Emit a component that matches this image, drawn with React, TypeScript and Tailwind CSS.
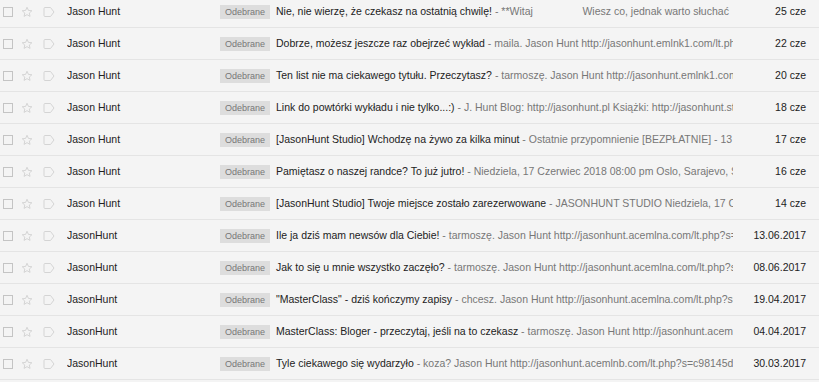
import React from "react";

type Row = { sender: string; subject: string; snippet: string; date: string };

const rows: Row[] = [
  { sender: "Jason Hunt", subject: "Nie, nie wierzę, że czekasz na ostatnią chwilę!", snippet: " - **Witaj                 Wiesz co, jednak warto słuchać", date: "25 cze" },
  { sender: "Jason Hunt", subject: "Dobrze, możesz jeszcze raz obejrzeć wykład", snippet: " - maila. Jason Hunt http://jasonhunt.emlnk1.com/lt.php?s=8d2", date: "22 cze" },
  { sender: "Jason Hunt", subject: "Ten list nie ma ciekawego tytułu. Przeczytasz?", snippet: " - tarmoszę. Jason Hunt http://jasonhunt.emlnk1.com/lt.php?s=", date: "20 cze" },
  { sender: "Jason Hunt", subject: "Link do powtórki wykładu i nie tylko...:)", snippet: " - J. Hunt Blog: http://jasonhunt.pl Książki: http://jasonhunt.store", date: "18 cze" },
  { sender: "Jason Hunt", subject: "[JasonHunt Studio] Wchodzę na żywo za kilka minut", snippet: " - Ostatnie przypomnienie [BEZPŁATNIE] - 13 czerwca", date: "17 cze" },
  { sender: "Jason Hunt", subject: "Pamiętasz o naszej randce? To już jutro!", snippet: " - Niedziela, 17 Czerwiec 2018 08:00 pm Oslo, Sarajevo, Skopje", date: "16 cze" },
  { sender: "Jason Hunt", subject: "[JasonHunt Studio] Twoje miejsce zostało zarezerwowane", snippet: " - JASONHUNT STUDIO Niedziela, 17 Czerwiec 2018", date: "14 cze" },
  { sender: "JasonHunt", subject: "Ile ja dziś mam newsów dla Ciebie!", snippet: " - tarmoszę. Jason Hunt http://jasonhunt.acemlna.com/lt.php?s=c98", date: "13.06.2017" },
  { sender: "JasonHunt", subject: "Jak to się u mnie wszystko zaczęło?", snippet: " - tarmoszę. Jason Hunt http://jasonhunt.acemlna.com/lt.php?s=c98", date: "08.06.2017" },
  { sender: "JasonHunt", subject: "\"MasterClass\" - dziś kończymy zapisy", snippet: " - chcesz. Jason Hunt http://jasonhunt.acemlna.com/lt.php?s=c98", date: "19.04.2017" },
  { sender: "JasonHunt", subject: "MasterClass: Bloger - przeczytaj, jeśli na to czekasz", snippet: " - tarmoszę. Jason Hunt http://jasonhunt.acemlna.com/lt.php?s=c98", date: "04.04.2017" },
  { sender: "JasonHunt", subject: "Tyle ciekawego się wydarzyło", snippet: " - koza? Jason Hunt http://jasonhunt.acemlnb.com/lt.php?s=c98145d9", date: "30.03.2017" },
];

function Checkbox() {
  return <div className="w-[10px] h-[10px] border border-[#c4c4c4] bg-transparent" />;
}

function Star() {
  return (
    <svg width="12" height="12" viewBox="0 0 24 24" fill="none" stroke="#cdcdcd" strokeWidth="1.6" strokeLinejoin="round">
      <path d="M12 2.5l2.9 6.3 6.8.7-5.1 4.6 1.5 6.7L12 17.3l-5.9 3.5 1.5-6.7L2.5 9.5l6.8-.7z" />
    </svg>
  );
}

function Tag() {
  return (
    <svg width="12" height="10" viewBox="0 0 12 10" fill="none" stroke="#d4d4d4" strokeWidth="1">
      <path d="M1 1.5 Q1 0.5 2 0.5 H7.5 L11 5 L7.5 9.5 H2 Q1 9.5 1 8.5 Z" />
    </svg>
  );
}

export default function App() {
  return (
    <div className="w-[819px] h-[382px] overflow-hidden bg-[#f4f4f4]" style={{ fontFamily: '"Liberation Sans", Arial, sans-serif' }}>
      <div className="-mt-[4px]">
        {rows.map((r, i) => (
          <div key={i} className="flex items-center h-[32px] border-b border-[#e4e4e4] text-[10.5px]">
            <div className="w-[18px] pl-[3px] flex items-center">
              <Checkbox />
            </div>
            <div className="w-[22px] pl-[3px] flex items-center">
              <Star />
            </div>
            <div className="w-[27px] pl-[3px] flex items-center">
              <Tag />
            </div>
            <div className="w-[153px] text-[#222] truncate">{r.sender}</div>
            <div className="flex-1 min-w-0 flex items-center overflow-hidden whitespace-pre">
              <span className="shrink-0 bg-[#dddddd] text-[#777] text-[9px] h-[14px] leading-[14px] px-[5px] mr-[6px]">Odebrane</span>
              <span className="shrink-0 text-[#222]">{r.subject}</span>
              <span className="block flex-1 min-w-0 overflow-hidden text-[#777]">{r.snippet}</span>
            </div>
            <div className="w-[86px] pr-[13px] text-right text-[#222] shrink-0">{r.date}</div>
          </div>
        ))}
      </div>
    </div>
  );
}
